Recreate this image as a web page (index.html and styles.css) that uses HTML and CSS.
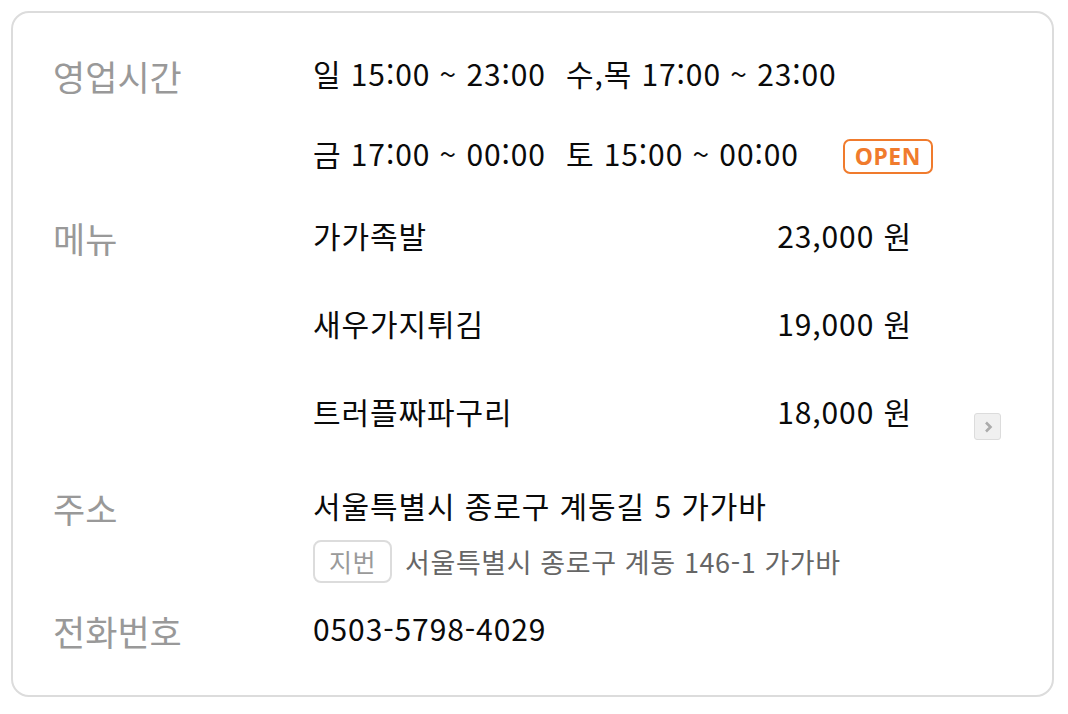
FILE: index.html
```html
<!DOCTYPE html>
<html lang="ko">
<head>
<meta charset="utf-8">
<link rel="stylesheet" href="styles.css">
</head>
<body>
<div class="card">
  <div class="row">
    <div class="label">영업시간</div>
    <div class="value">
      <div class="hours">
        <span class="h">일 15:00 ~ 23:00</span><span class="h">수,목 17:00 ~ 23:00</span>
      </div>
      <div class="hours second">
        <span class="h">금 17:00 ~ 00:00</span><span class="h">토 15:00 ~ 00:00</span><span class="open">OPEN</span>
      </div>
    </div>
  </div>
  <div class="row menu-row">
    <div class="label">메뉴</div>
    <div class="value menu">
      <div class="item"><span class="name">가가족발</span><span class="price">23,000 원</span></div>
      <div class="item"><span class="name">새우가지튀김</span><span class="price">19,000 원</span></div>
      <div class="item last"><span class="name">트러플짜파구리</span><span class="price">18,000 원</span><span class="more"><svg width="14" height="16" viewBox="0 0 14 16"><path d="M5 3.5 L9.5 8 L5 12.5" fill="none" stroke="#ababab" stroke-width="2.6"/></svg></span></div>
    </div>
  </div>
  <div class="row addr-row">
    <div class="label">주소</div>
    <div class="value">
      <div class="addr">서울특별시 종로구 계동길 5 가가바</div>
      <div class="jibun"><span class="tag">지번</span><span class="jaddr">서울특별시 종로구 계동 146-1 가가바</span></div>
    </div>
  </div>
  <div class="row tel-row">
    <div class="label">전화번호</div>
    <div class="value">0503-5798-4029</div>
  </div>
</div>
</body>
</html>
```
FILE: styles.css
```css
* { box-sizing: border-box; }
html, body { margin: 0; padding: 0; background: #fff; }
body {
  font-family: "Noto Sans CJK KR", "Noto Sans", sans-serif;
  color: #0a0a0a;
  padding: 11px 14px 17px 11px;
}
.card {
  width: 1043px;
  height: 686px;
  border: 2px solid #dcdcdc;
  border-radius: 18px;
  padding: 40px 0 0 40px;
}
.row { display: flex; }
.label {
  width: 260px;
  flex: none;
  font-size: 35px;
  color: #999;
  line-height: 40px;
  margin-top: 3px;
}
.value { font-size: 30px; line-height: 40px; letter-spacing: 0.9px; }
.hours { display: flex; align-items: center; height: 40px; white-space: nowrap; }
.hours.second { margin-top: 40px; }
.h { margin-right: 20px; }
.open {
  align-self: flex-start;
  margin-left: 24px;
  margin-top: 6px;
  font-family: "Noto Sans", sans-serif;
  font-weight: 700;
  font-size: 23px;
  letter-spacing: 0.5px;
  color: #f07b2d;
  border: 2px solid #f07b2d;
  border-radius: 7px;
  line-height: 31px;
  height: 35px;
  width: 90px;
  text-align: center;
}
.menu-row { margin-top: 42px; }
.menu { width: 700px; }
.item { display: flex; align-items: center; position: relative; height: 40px; margin-bottom: 48px; }
.item .name { width: 437px; }
.item .price { width: 162px; text-align: right; }
.more {
  position: absolute;
  left: 661px;
  top: 22px;
  width: 27px;
  height: 27px;
  border: 1px solid #dcdcdc;
  background: #f0f0f0;
  border-radius: 3px;
  display: flex;
  align-items: center;
  justify-content: center;
}
.item.last { margin-bottom: 0; }
.addr-row { margin-top: 54px; }
.jibun { display: flex; align-items: center; margin-top: 15px; }
.tag {
  font-size: 25px;
  letter-spacing: 0.5px;
  color: #9a9a9a;
  border: 2px solid #dcdcdc;
  border-radius: 8px;
  line-height: 39px;
  height: 43px;
  width: 79px;
  text-align: center;
  margin-right: 13px;
}
.jaddr { font-size: 27px; letter-spacing: 0.6px; color: #666; }
.tel-row { margin-top: 25px; }
```
